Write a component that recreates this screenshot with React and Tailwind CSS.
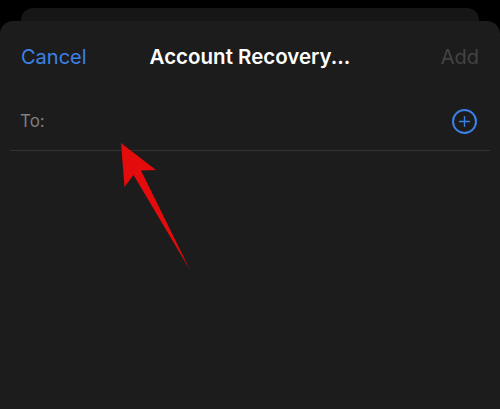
import React from 'react';
import { Plus } from 'lucide-react';

const App = () => {
  return (
    <div className="relative h-[409px] w-[500px] overflow-hidden bg-black pt-2 font-['Inter',sans-serif]">
      {/* Card stacked behind the sheet */}
      <div className="mx-[21px] h-[13px] rounded-t-[12px] bg-[#161616]"></div>

      {/* Sheet */}
      <div className="h-[388px] rounded-t-[13px] bg-[#1c1c1c]">
        <header className="grid h-[72px] grid-cols-[1fr_auto_1fr] items-center px-[21px]">
          <button className="justify-self-start text-[20px] leading-none text-[#3b82e8]">Cancel</button>
          <h2 className="text-[20.5px] leading-none font-semibold text-white">Account Recovery...</h2>
          <button className="justify-self-end text-[20px] leading-none text-[#434343]">Add</button>
        </header>

        <div className="mx-[10px] flex h-[58px] items-center justify-between border-b border-[#333333] pr-[13px] pl-[10px]">
          <span className="text-[17px] leading-none text-[#7e7e7e]">To:</span>
          <span className="flex h-[25px] w-[25px] items-center justify-center rounded-full border-2 border-[#3b82e8] text-[#3b82e8]">
            <Plus size={17} strokeWidth={1.8} />
          </span>
        </div>
      </div>

      {/* Annotation arrow */}
      <svg className="absolute top-0 left-0" width="500" height="409" viewBox="0 0 500 409">
        <path d="M121 143 L156 170 L141 170.5 L190 270 L133.5 175 L124.5 187 Z" fill="#e30b0b" />
      </svg>
    </div>
  );
};

export default App;
